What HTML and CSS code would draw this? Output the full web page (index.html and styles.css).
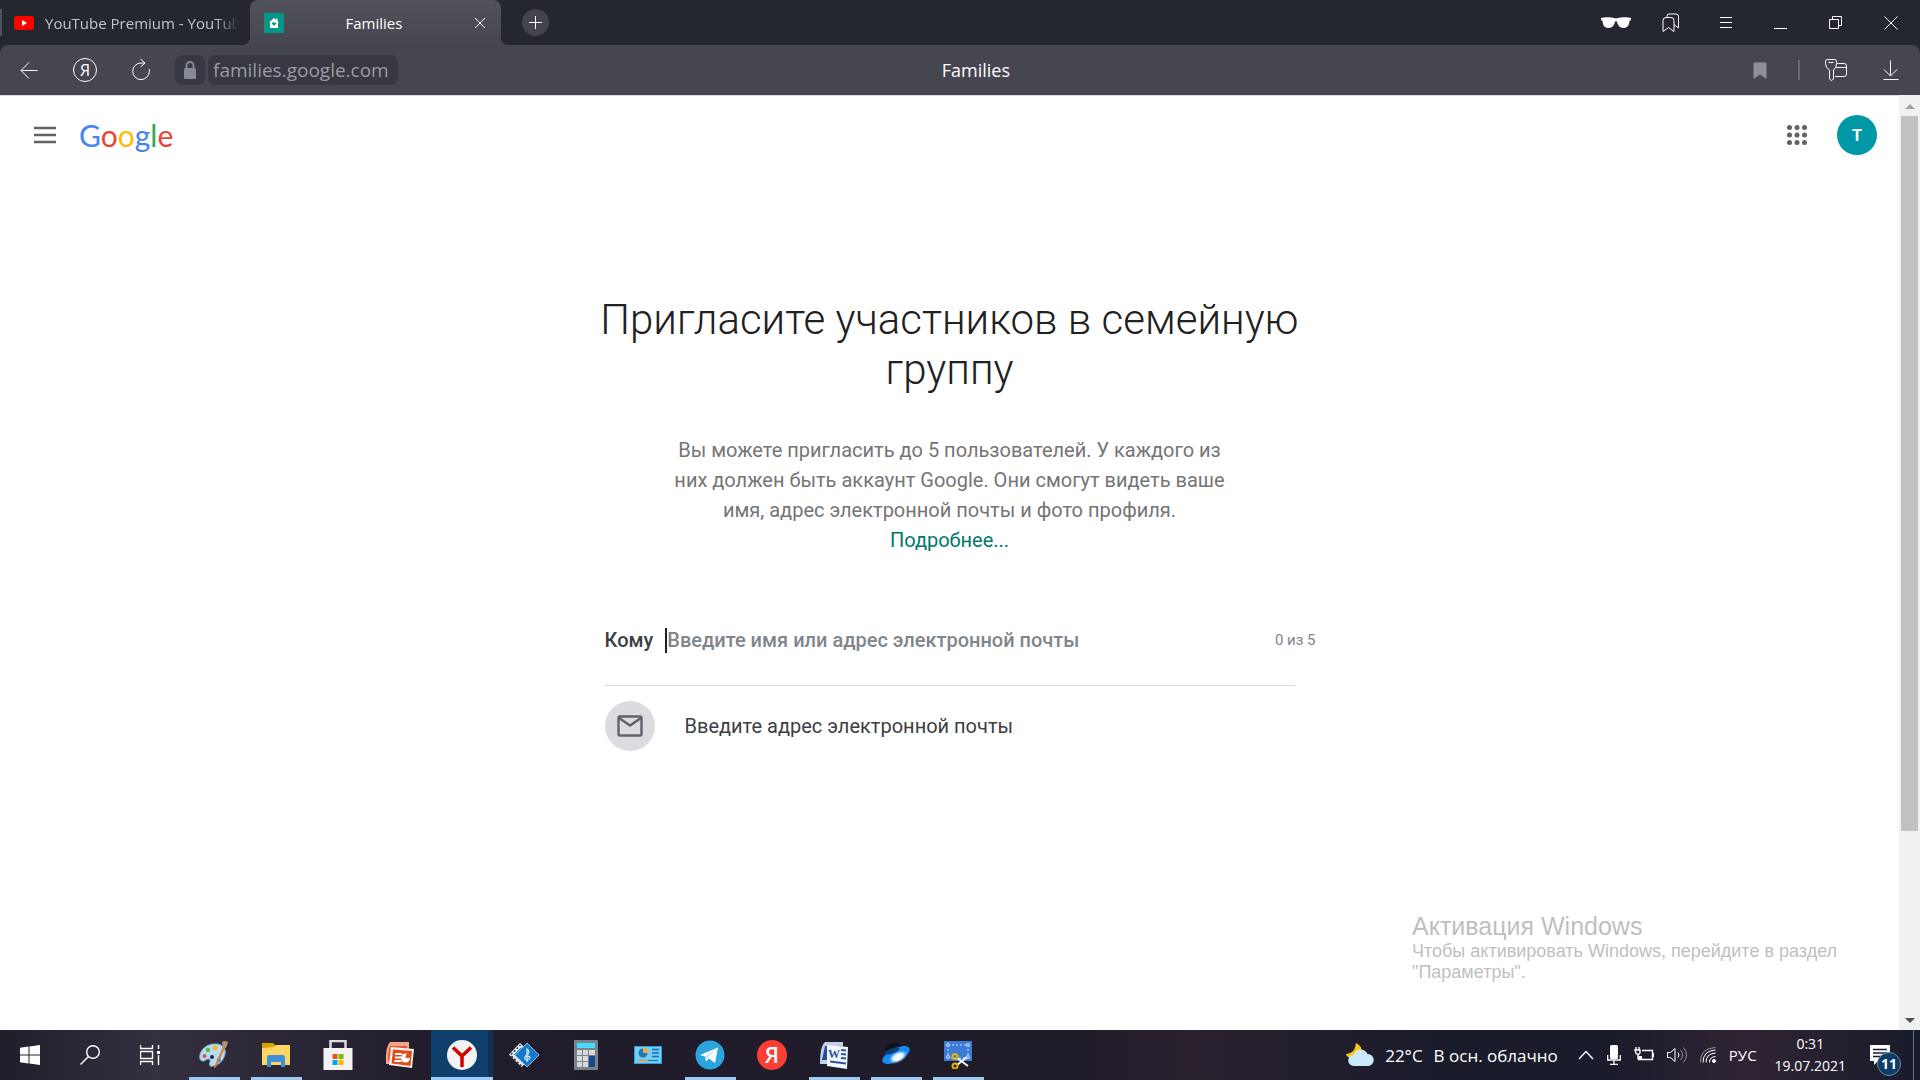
FILE: index.html
```html
<!DOCTYPE html>
<html lang="ru">
<head>
  <meta charset="UTF-8">
  <meta name="viewport" content="width=device-width, initial-scale=1.0">
  <title>Families</title>
  <link rel="stylesheet" href="styles.css">
</head>
<body>
  <!-- Browser tabs -->
  <div class="tabbar">
    <div class="tab">
      <svg width="20" height="16" viewBox="0 0 20 16"><rect y="1" width="20" height="14" rx="3" fill="#f00"/><path d="M8 5l5 3-5 3z" fill="#fff"/></svg>
      <span class="tab-title">YouTube Premium - YouTube</span>
    </div>
    <div class="tab active">
      <svg width="20" height="20" viewBox="0 0 20 20"><rect width="20" height="20" fill="#009688"/><path d="M10 5l5 4.500h-1V15H6V9.500H5z" fill="#fff"/><path d="M12 5.500h1.500v3H12z" fill="#fff"/><path d="M10 13l-2.100-2.200a1.200 1.200 0 0 1 2.100-1 1.200 1.200 0 0 1 2.100 1z" fill="#009688"/></svg>
      <span class="tab-title">Families</span>
      <button class="tab-close" aria-label="Закрыть вкладку">
        <svg width="12" height="12" viewBox="0 0 12 12" class="line"><path d="M1 1l10 10M11 1L1 11"/></svg>
      </button>
    </div>
    <button class="new-tab" aria-label="Новая вкладка">
      <svg width="13" height="13" viewBox="0 0 13 13" class="line"><path d="M6.500 0v13M0 6.500h13"/></svg>
    </button>
    <div class="window-buttons">
      <button aria-label="Режим инкогнито">
        <svg width="30" height="14" viewBox="0 0 30 14"><path d="M0 2C3 1 10 1 13 2q2 .8 4 0c3-1 10-1 13 0v2l-1.500 1c-.5 5-2.500 7-6 7-4 0-6-3-6.500-6.500h-2C13.500 9 11.500 12 7.500 12c-3.500 0-5.500-2-6-7L0 4z" fill="#fff"/></svg>
      </button>
      <button aria-label="Закладки">
        <svg width="18" height="20" viewBox="0 0 18 20" class="line"><path d="M1 18.500V7.500q0-3 3-3h5q3 0 3 3v11l-5.500-4z"/><path d="M5 4.500V3q0-2 2-2h7q2.500 0 2.500 2.500V15L12 11.500"/></svg>
      </button>
      <button aria-label="Меню">
        <svg width="12" height="12" viewBox="0 0 12 12" class="line"><path d="M0 .5h12M0 5.500h12M0 10.500h12"/></svg>
      </button>
      <button aria-label="Свернуть">
        <svg width="13" height="13" viewBox="0 0 13 13" class="line"><path d="M0 12.500h13"/></svg>
      </button>
      <button aria-label="Развернуть">
        <svg width="13" height="13" viewBox="0 0 13 13" class="line"><path d="M.5 3.500h9v9h-9zM3.500 3.500v-3h9v9h-3"/></svg>
      </button>
      <button aria-label="Закрыть">
        <svg width="14" height="14" viewBox="0 0 14 14" class="line"><path d="M.5.5l13 13M13.500.5l-13 13"/></svg>
      </button>
    </div>
  </div>

  <!-- Address bar -->
  <div class="toolbar">
    <div class="nav-buttons">
      <button aria-label="Назад">
        <svg width="18" height="18" viewBox="0 0 18 18" class="line"><path d="M17.500 9.500H1M9 1.500l-8 8 8 8"/></svg>
      </button>
      <button aria-label="Яндекс" class="ya">Я</button>
      <button aria-label="Обновить">
        <svg width="20" height="24" viewBox="0 0 20 24" class="line"><path d="M13 5H10a8.300 8.300 0 1 0 8.300 8.300V11"/><path d="M9.500 1l4.500 4-4.500 4"/></svg>
      </button>
    </div>
    <button class="lock" aria-label="Защищённое соединение">
      <svg width="12" height="18" viewBox="0 0 12 18"><rect y="7" width="12" height="11" rx="1.500" fill="#858a94"/><path d="M2.500 8V4.500a3.500 3.500 0 0 1 7 0V8" fill="none" stroke="#858a94" stroke-width="2"/></svg>
    </button>
    <a class="url" href="#">families.google.com</a>
    <div class="page-title">Families</div>
    <div class="toolbar-right">
      <button aria-label="Добавить в закладки">
        <svg width="14" height="17" viewBox="0 0 14 17"><path d="M.5 1.500Q.5.500 1.500.5h11q1 0 1 1V17L7 12.500.5 17z" fill="#8f8f94"/></svg>
      </button>
      <span class="divider"></span>
      <button aria-label="Пароли и карты">
        <svg width="24" height="24" viewBox="0 0 24 24" class="line"><path d="M5.500 12Q1.500 10 1.500 5.500v-2q0-2 2-2h7q2 0 2 2v2q0 4.500-3 6.500v9l-2 1.500-2-1.500zM4.500 4.500h5"/><path d="M13 5.500h7q2.500 0 2.500 2.500v8q0 2.500-2.500 2.500h-9M12 9.500h10.500"/></svg>
      </button>
      <button aria-label="Загрузки">
        <svg width="16" height="20" viewBox="0 0 16 20" class="line"><path d="M7.500.5V16M1 9.500L7.500 16 14 9.500M.5 19.500h15"/></svg>
      </button>
    </div>
  </div>

  <div class="viewport">
    <div class="page">
      <header>
        <button aria-label="Главное меню">
          <svg width="24" height="18" viewBox="0 0 24 18"><path d="M1 2h22M1 9h22M1 16h22" stroke="#5f6368" stroke-width="2.500"/></svg>
        </button>
        <a class="logo" href="#"><span class="b">G</span><span class="r">o</span><span class="y">o</span><span class="b">g</span><span class="g">l</span><span class="r">e</span></a>
        <button class="apps" aria-label="Приложения Google">
          <svg width="20" height="20" viewBox="0 0 20 20" fill="#5f6368"><circle cx="2.500" cy="2.500" r="2.500"/><circle cx="10" cy="2.500" r="2.500"/><circle cx="17.500" cy="2.500" r="2.500"/><circle cx="2.500" cy="10" r="2.500"/><circle cx="10" cy="10" r="2.500"/><circle cx="17.500" cy="10" r="2.500"/><circle cx="2.500" cy="17.500" r="2.500"/><circle cx="10" cy="17.500" r="2.500"/><circle cx="17.500" cy="17.500" r="2.500"/></svg>
        </button>
        <button class="avatar">T</button>
      </header>

      <main>
        <h1>Пригласите участников в семейную группу</h1>
        <p class="intro">Вы можете пригласить до 5 пользователей. У каждого из них должен быть аккаунт Google. Они смогут видеть ваше имя, адрес электронной почты и фото профиля. <a href="#">Подробнее...</a></p>
        <div class="invite">
          <div class="invite-row">
            <label for="invite-to">Кому</label>
            <input type="text" id="invite-to" placeholder="Введите имя или адрес электронной почты">
            <span class="count">0 из 5</span>
          </div>
          <button class="suggestion">
            <span class="mail-icon">
              <svg width="26" height="22" viewBox="0 0 26 22" fill="none" stroke="#5f6368" stroke-width="2.400"><rect x="1.500" y="1.500" width="23" height="19" rx="1.500"/><path d="M2 3l11 7.500L24 3"/></svg>
            </span>
            Введите адрес электронной почты
          </button>
        </div>
      </main>

      <div class="watermark">
        <div class="watermark-title">Активация Windows</div>
        <div>Чтобы активировать Windows, перейдите в раздел "Параметры".</div>
      </div>
    </div>
    <div class="scrollbar">
      <span class="arrow up"></span>
      <span class="thumb"></span>
      <span class="arrow down"></span>
    </div>
  </div>

  <!-- Windows taskbar -->
  <footer class="taskbar">
    <div class="system">
      <button aria-label="Пуск">
        <svg width="20" height="20" viewBox="0 0 20 20" fill="#fff"><path d="M0 2.800l8.500-1.200v8H0zM9.500 1.500L20 0v9.600H9.500zM0 10.500h8.500v8L0 17.300zM9.500 10.500H20V20L9.500 18.600z"/></svg>
      </button>
      <button aria-label="Поиск">
        <svg width="20" height="20" viewBox="0 0 20 20" class="line thick"><circle cx="13" cy="7" r="6.300"/><path d="M8.500 11.500L.5 19.500"/></svg>
      </button>
      <button aria-label="Представление задач">
        <svg width="20" height="20" viewBox="0 0 20 20" class="line thick"><path d="M.5 0v3.500h12V0M.5 20v-3.500h12V20M.5 6.500h12v7H.5zM18.500 0v4M18.500 10v10"/><path d="M17 6h3v3h-3z" fill="#fff" stroke="none"/></svg>
      </button>
    </div>
    <div class="apps-list">
      <button class="app open" aria-label="Paint">
        <svg width="30" height="30" viewBox="0 0 30 30"><path d="M1 19C-1 11 8 3 17 4c7 0 10 5 9 10-1 6-6 11-12 12-4 1-4-2-3-4 1-3-2-4-4-2-2 1-5 2-6-1z" fill="#b5dcf3" stroke="#7fb0d2"/><circle cx="13" cy="17" r="2" fill="#2a2638"/><circle cx="5.500" cy="16" r="2" fill="#e44e45"/><circle cx="9" cy="10" r="2.300" fill="#5cb548"/><circle cx="16" cy="8" r="2.500" fill="#f4b92e"/><circle cx="20" cy="20" r="2" fill="#4488d8"/><path d="M24 7l2 1-9 19q-2 2-2 0z" fill="#d77e28"/><path d="M23 2q3-2 6 0-1 5-3 7l-3-1.500q1-3 0-5.500z" fill="#b6916c"/></svg>
      </button>
      <button class="app open" aria-label="Проводник">
        <svg width="28" height="24" viewBox="0 0 28 24"><path d="M0 0h11l3 3v4H0z" fill="#dfa100"/><path d="M0 5q12 0 14-3h14v20H0z" fill="#fdd663"/><path d="M5 24V14q0-2 2-2h14q2 0 2 2v10h-4v-5H9v5z" fill="#3d91dc"/></svg>
      </button>
      <button class="app" aria-label="Microsoft Store">
        <svg width="30" height="30" viewBox="0 0 30 30"><path d="M7.500 9V1h15v8" fill="none" stroke="#ddd" stroke-width="2.500"/><path d="M.5 8h29v22H.5z" fill="#f2f2f2"/><path d="M9.500 14h5v5h-5z" fill="#f25022"/><path d="M15.500 14h5v5h-5z" fill="#7fba00"/><path d="M9.500 20h5v5h-5z" fill="#00a4ef"/><path d="M15.500 20h5v5h-5z" fill="#ffb900"/></svg>
      </button>
      <button class="app" aria-label="PowerPoint">
        <svg width="30" height="28" viewBox="0 0 30 28"><path d="M5 1h19v22H1Q0 6 5 1z" fill="#f2a58a"/><path d="M5 5h17v15H3q0-10 2-15z" fill="#df5a33"/><path d="M6 6l23 2-2 19-23-3z" fill="#fff1e9"/><path d="M8 8.500l19 1.500-1.500 15-19-2.500z" fill="#dd4d1c"/><path d="M10 13h7M10 16.500h6M9.500 20h7" stroke="#fff" stroke-width="2"/><circle cx="20.500" cy="17" r="4.500" fill="#fff"/><path d="M20.500 17l1-4.500q3.500.5 3.500 4.500z" fill="#dd4d1c"/></svg>
      </button>
      <button class="app open current" aria-label="Яндекс.Браузер">
        <svg width="30" height="30" viewBox="0 0 30 30"><circle cx="15" cy="15" r="15" fill="#f3f3f3"/><path d="M6 7.500l9 8.500 9-8.500M15 15v12" fill="none" stroke="#d40000" stroke-width="3.500"/></svg>
      </button>
      <button class="app" aria-label="Мультимедиа">
        <svg width="30" height="26" viewBox="0 0 30 26"><path d="M0 12.500L11 1l4 4-8 8 9 9-3.500 3z" fill="#e8eef4"/><path d="M2 12.500L11.500 3M2.500 14l10 10" stroke="#28374a" stroke-width="1.500" stroke-dasharray="2 2"/><path d="M5 12.500l7-7 2 2-5 5 6 6-2 2z" fill="#1d5f97"/><path d="M18 1l12 12-12 12L6 13z" fill="#1878c8" stroke="#7dc4f2"/><path d="M18 20V7q3 2 1 5-4 3-3 5 3 2 5-1-1-3-4-1" fill="none" stroke="#c9e9ff" stroke-width="1.300"/></svg>
      </button>
      <button class="app" aria-label="Калькулятор">
        <svg width="24" height="30" viewBox="0 0 24 30"><rect width="24" height="30" rx="1" fill="#7b8289"/><path d="M3 3h18v5H3z" fill="#46dcff"/><path d="M3 10h5v5H3zM9 10h5v5H9zM15 10h6v5h-6zM3 16h5v5H3zM9 16h5v5H9zM3 22h5v5H3zM9 22h5v5H9z" fill="#d5dade"/><path d="M15 16h6v11h-6z" fill="#174a8c"/></svg>
      </button>
      <button class="app" aria-label="Панель управления">
        <svg width="28" height="18" viewBox="0 0 28 18"><rect x=".5" y=".5" width="27" height="17" fill="#72cdf7" stroke="#2c9fdc"/><circle cx="9" cy="7" r="4.500" fill="#1f79bd"/><path d="M9 7V1.500Q14 2 14.500 7z" fill="#f3ad32"/><path d="M18 3.500h7M18 7h7M18 10.500h7" stroke="#176bae" stroke-width="1.500"/><path d="M4 14.500h10" stroke="#f39a1d" stroke-width="1.500"/><path d="M14 14.500h10" stroke="#176bae"/></svg>
      </button>
      <button class="app open" aria-label="Telegram">
        <svg width="30" height="30" viewBox="0 0 30 30"><circle cx="15" cy="15" r="14.500" fill="#2ca5de"/><path d="M5 15L23 7.500 20 23l-6-4.500-3 3-1-5z" fill="#fff"/><path d="M10 16.500L20 10l-8 8-1 3.500z" fill="#bddff1"/></svg>
      </button>
      <button class="app" aria-label="Яндекс"><span class="ya-app">Я</span></button>
      <button class="app open" aria-label="Word">
        <svg width="28" height="28" viewBox="0 0 28 28"><path d="M5 1h18v22H0Q0 5 5 1z" fill="#bfd0ed"/><path d="M5 5h17v14H2z" fill="#274b96"/><path d="M7 4l21 2-1 22-20-3z" fill="#f4f7fc"/><path d="M21 9l5 .5M21 13l5 .5M21 17l5 .5M10 20.500l16 2" stroke="#2a55a5" stroke-width="2"/><text x="8" y="17" class="word">W</text></svg>
      </button>
      <button class="app open" aria-label="Яндекс.Диск">
        <svg width="30" height="26" viewBox="0 0 30 26"><defs><radialGradient id="glow"><stop offset="0" stop-color="#fff"/><stop offset=".5" stop-color="#e4f5ff"/><stop offset="1" stop-color="#158dfa" stop-opacity="0"/></radialGradient></defs><ellipse cx="12" cy="6" rx="8" ry="5" transform="rotate(-15 12 6)" fill="#0a1420"/><ellipse cx="15" cy="13" rx="15" ry="6.500" transform="rotate(-27 15 13)" fill="#168cf8"/><ellipse cx="11" cy="9" rx="8" ry="2.500" transform="rotate(-22 11 9)" fill="#0e3f74"/><ellipse cx="17" cy="15" rx="11" ry="6" transform="rotate(-27 17 15)" fill="url(#glow)"/></svg>
      </button>
      <button class="app open" aria-label="Ножницы">
        <svg width="28" height="28" viewBox="0 0 28 28"><path d="M0 0h28v20H0z" fill="#3e7bd8"/><path d="M4 4h20v13H4z" fill="none" stroke="#c8dcfa" stroke-dasharray="2 2"/><g fill="#3e7bd8" stroke="#dce9ff"><circle cx="4" cy="4" r="1.500"/><circle cx="24" cy="4" r="1.500"/><circle cx="4" cy="16" r="1.500"/><circle cx="24" cy="16" r="1.500"/></g><path d="M13 17l11 8M13 24l10-8" stroke="#f2f5f8" stroke-width="2"/><g fill="none" stroke="#e5b500" stroke-width="2"><circle cx="11" cy="15.500" r="2.500"/><circle cx="11" cy="25" r="2.500"/></g></svg>
      </button>
    </div>
    <div class="tray">
      <button class="weather">
        <svg width="28" height="26" viewBox="0 0 28 26"><path d="M10 1q6 3 6 9l-10 6q-5 0-6-4 9 0 10-11z" fill="#ffc51c"/><path d="M8 24a5.500 5.500 0 0 1-.5-11 7.500 7.500 0 0 1 14-1A6 6 0 0 1 22 24z" fill="#cce9fb"/></svg>
        <span>22°C</span><span>В осн. облачно</span>
      </button>
      <div class="tray-icons">
        <svg width="16" height="10" viewBox="0 0 16 10" class="line thick"><path d="M1 9l7-7.500L15 9"/></svg>
        <svg width="14" height="20" viewBox="0 0 14 20"><rect x="3" width="8" height="14" rx="1.500" fill="#fff"/><path d="M.7 10v5h12.600v-5M7 15v4M3 19.300h8" fill="none" stroke="#fff" stroke-width="1.300"/></svg>
        <svg width="20" height="16" viewBox="0 0 20 16" class="line thick"><path d="M8 3.500h10.500v9H4.500V9M19.500 6v4M1 3h5v3l-2 2-2-2zM2 0v3M5 0v3M4 8v4"/><path d="M5 9h3v3H5z" fill="#fff" stroke="none"/></svg>
        <svg width="20" height="18" viewBox="0 0 20 18" class="line"><path d="M.5 6.500h3L8 2.500v13l-4.500-4h-3zM11 6.500q2 2.500 0 5"/><path d="M13.500 4q4 5 0 10M16.500 1.500q6 7.500 0 15" opacity=".5"/></svg>
        <svg width="16" height="16" viewBox="0 0 16 16" class="line"><circle cx="14" cy="14" r="1.500" fill="#fff"/><path d="M9.500 15.500q0-5.500 6-6M6 15.500q0-9 9.500-9.500M3 15.500q0-12 12.500-12.500"/><path d="M.5 15.500Q0 1 15.500.5" opacity=".5"/></svg>
      </div>
      <button class="lang">РУС</button>
      <button class="clock"><span>0:31</span><span>19.07.2021</span></button>
      <button class="notifications" aria-label="Уведомления">
        <svg width="20" height="20" viewBox="0 0 20 20"><path d="M0 0h20v16H8l-4 4v-4H0z" fill="#fff"/><path d="M3 4.500h14M3 8h14M3 11.500h8" stroke="#1c1b2c" stroke-width="1.500"/></svg>
        <span class="badge">11</span>
      </button>
      <span class="show-desktop"></span>
    </div>
  </footer>
</body>
</html>
```
FILE: styles.css
```css
* {
  margin: 0;
  padding: 0;
  box-sizing: border-box;
}

body {
  display: flex;
  flex-direction: column;
  min-height: 100vh;
  background: #fff;
  font-family: 'Open Sans', 'Noto Sans', sans-serif;
}

button {
  display: flex;
  align-items: center;
  justify-content: center;
  border: none;
  background: none;
  color: inherit;
  font: inherit;
  cursor: pointer;
}

a {
  text-decoration: none;
}

svg {
  display: block;
  flex-shrink: 0;
}

.line {
  fill: none;
  stroke: #fff;
  stroke-width: 1;
}

.thick {
  stroke-width: 1.4;
}

/* Tabs */
.tabbar {
  display: flex;
  align-items: center;
  height: 45px;
  background: #24272f;
  color: #fff;
  font-size: 15px;
}

.tab {
  display: flex;
  align-items: center;
  gap: 11px;
  width: 250px;
  height: 27px;
  padding: 0 11px 0 12px;
  border-left: 2px solid #50535b;
  color: #c4c5c8;
}

.tab .tab-title {
  flex: 1;
  overflow: hidden;
  white-space: nowrap;
  mask-image: linear-gradient(to right, #000 88%, transparent);
}

.tab.active {
  position: relative;
  width: 251px;
  height: 45px;
  padding: 0 15px 0 14px;
  border: none;
  border-radius: 8px 8px 0 0;
  background: linear-gradient(#52525b, #464650);
  color: #fff;
}

/* rounded feet of the active tab */
.tab.active::before,
.tab.active::after {
  content: '';
  position: absolute;
  bottom: 0;
  width: 8px;
  height: 8px;
}

.tab.active::before {
  right: 100%;
  background: radial-gradient(circle at 0 0, #24272f 8px, #464650 8px);
}

.tab.active::after {
  left: 100%;
  background: radial-gradient(circle at 100% 0, #24272f 8px, #464650 8px);
}

.tab.active .tab-title {
  padding-right: 10px;
  text-align: center;
  mask-image: none;
}

.new-tab {
  width: 27px;
  height: 27px;
  margin-left: 21px;
  border-radius: 50%;
  background: #42434c;
}

.window-buttons {
  display: flex;
  margin-left: auto;
  padding-right: 2px;
}

.window-buttons button {
  width: 55px;
  height: 45px;
}

/* Toolbar */
.toolbar {
  display: flex;
  align-items: center;
  height: 50px;
  border-radius: 8px 8px 0 0;
  background: #464650;
  box-shadow: 0 -8px 0 #24272f;
  color: #fff;
}

.nav-buttons {
  display: flex;
  align-items: center;
  padding-left: 1px;
}

.nav-buttons button {
  width: 56px;
  height: 50px;
}

.nav-buttons .ya {
  width: 24px;
  height: 24px;
  margin: 0 16px;
  border: 1px solid #fff;
  border-radius: 50%;
  font-size: 16px;
  line-height: 22px;
}

.lock {
  width: 30px;
  height: 30px;
  margin-left: 6px;
  border-radius: 7px;
  background: #373841;
}

.url {
  height: 30px;
  margin-left: 3px;
  padding: 0 9px 0 5px;
  border-radius: 7px;
  background: #373841;
  color: #9b9ca3;
  font-size: 19px;
  line-height: 30px;
}

.page-title {
  flex: 1;
  padding-right: 178px;
  text-align: center;
  font-size: 18px;
}

.toolbar-right {
  display: flex;
  align-items: center;
  padding-right: 2px;
}

.toolbar-right button {
  width: 55px;
  height: 50px;
}

.divider {
  width: 2px;
  height: 20px;
  margin: 0 8px 0 11px;
  background: #6a6a73;
}

/* Page */
.viewport {
  display: flex;
  flex: 1;
}

.page {
  position: relative;
  flex: 1;
  border-top: 1px solid #dadce0;
  font-family: Roboto, sans-serif;
}

header {
  display: flex;
  align-items: center;
  height: 78px;
  padding: 0 22px 0 33px;
}

.logo {
  margin-left: 22px;
  font-family: Lato, sans-serif;
  font-size: 30px;
  line-height: 40px;
}

.b { color: #4285f4; }
.r { color: #ea4335; }
.y { color: #fbbc05; }
.g { color: #34a853; }

.apps {
  margin-left: auto;
}

.avatar {
  width: 40px;
  height: 40px;
  margin-left: 30px;
  border-radius: 50%;
  background: #0097a7;
  color: #fff;
  font-size: 16px;
  font-weight: 700;
}

main {
  max-width: 740px;
  margin: 0 auto;
  padding-top: 121px;
  text-align: center;
}

h1 {
  color: #212121;
  font-size: 42px;
  font-weight: 300;
  line-height: 50px;
}

.intro {
  max-width: 560px;
  margin: 40px auto 0;
  color: #757575;
  font-size: 20px;
  line-height: 30px;
}

.intro a {
  color: #00796b;
}

.invite {
  padding: 60px 25px 0;
  text-align: left;
}

.invite-row {
  display: flex;
  align-items: center;
  height: 71px;
  border-bottom: 1px solid #dadce0;
  padding-bottom: 20px;
  font-size: 20px;
  font-weight: 500;
}

.invite-row label {
  margin-right: 12px;
  color: #3c4043;
}

.invite-row input {
  flex: 1;
  height: 25px;
  border: none;
  border-left: 2px solid #202124;
  outline: none;
  font: inherit;
}

.invite-row input::placeholder {
  color: #80868b;
  opacity: 1;
}

.count {
  margin-right: -21px;
  color: #80868b;
  font-size: 15px;
  font-weight: 400;
}

.suggestion {
  gap: 30px;
  margin-top: 15px;
  color: #3c4043;
  font-size: 20px;
}

.mail-icon {
  display: flex;
  align-items: center;
  justify-content: center;
  width: 50px;
  height: 50px;
  border-radius: 50%;
  background: #dadce0;
}

.watermark {
  position: absolute;
  right: 47px;
  bottom: 47px;
  width: 440px;
  color: #bfbfbf;
  font-family: 'Liberation Sans', Arial, sans-serif;
  font-size: 18px;
  line-height: 21px;
}

.watermark-title {
  font-size: 25px;
  line-height: 29px;
}

/* Scrollbar */
.scrollbar {
  display: flex;
  flex-direction: column;
  align-items: center;
  width: 21px;
  background: #f1f1f1;
}

.arrow {
  border: 5px solid transparent;
}

.arrow.up {
  margin: 4px 0 7px;
  border-bottom-color: #a3a3a3;
}

.arrow.down {
  margin-top: auto;
  margin-bottom: 2px;
  border-top-color: #505050;
}

.thumb {
  width: 17px;
  height: 76.5%;
  background: #c1c1c1;
}

/* Taskbar */
.taskbar {
  display: flex;
  height: 50px;
  background: linear-gradient(to right, #211d2b, #343040 8%, #211d2c 22%, #1f1b29 55%, #2a202e 62%, #1a1c2c 75%, #1a1c2c 84%, #302333 91%, #181c2c);
  color: #fff;
}

.system,
.apps-list {
  display: flex;
}

.system button {
  width: 60px;
}

.apps-list {
  padding-left: 3px;
}

.app {
  position: relative;
  width: 62px;
}

.app.open::after {
  content: '';
  position: absolute;
  right: 5px;
  bottom: 0;
  left: 6px;
  height: 3px;
  background: #9bcbf3;
}

.app.current {
  background: linear-gradient(to right, #103f6e 57px, #123052 57px);
}

.app.current::after {
  right: 0;
  left: 0;
}

.ya-app {
  width: 30px;
  height: 30px;
  border-radius: 50%;
  background: #fc3f35;
  font-size: 22px;
  font-weight: 600;
  line-height: 29px;
}

.word {
  fill: #2a55a5;
  font: bold 12px 'Liberation Serif', serif;
}

.tray {
  display: flex;
  align-items: center;
  margin-left: auto;
}

.weather {
  gap: 11px;
  font-size: 17px;
}

.tray-icons {
  display: flex;
  align-items: center;
  gap: 13px;
  margin-left: 20px;
}

.lang {
  margin-left: 13px;
  font-size: 15px;
}

.clock {
  flex-direction: column;
  margin-left: 18px;
  font-size: 14px;
  line-height: 22px;
}

.notifications {
  position: relative;
  width: 40px;
  height: 50px;
  margin-left: 19px;
  padding-right: 10px;
}

.badge {
  position: absolute;
  right: 4px;
  bottom: 4px;
  width: 24px;
  height: 24px;
  border: 1px solid #6d8ba8;
  border-radius: 50%;
  background: #0d3d66;
  font-size: 14px;
  font-weight: 700;
  line-height: 22px;
}

.show-desktop {
  width: 7px;
  height: 50px;
  margin-left: 8px;
  border-left: 1px solid #6a6b76;
}
```
